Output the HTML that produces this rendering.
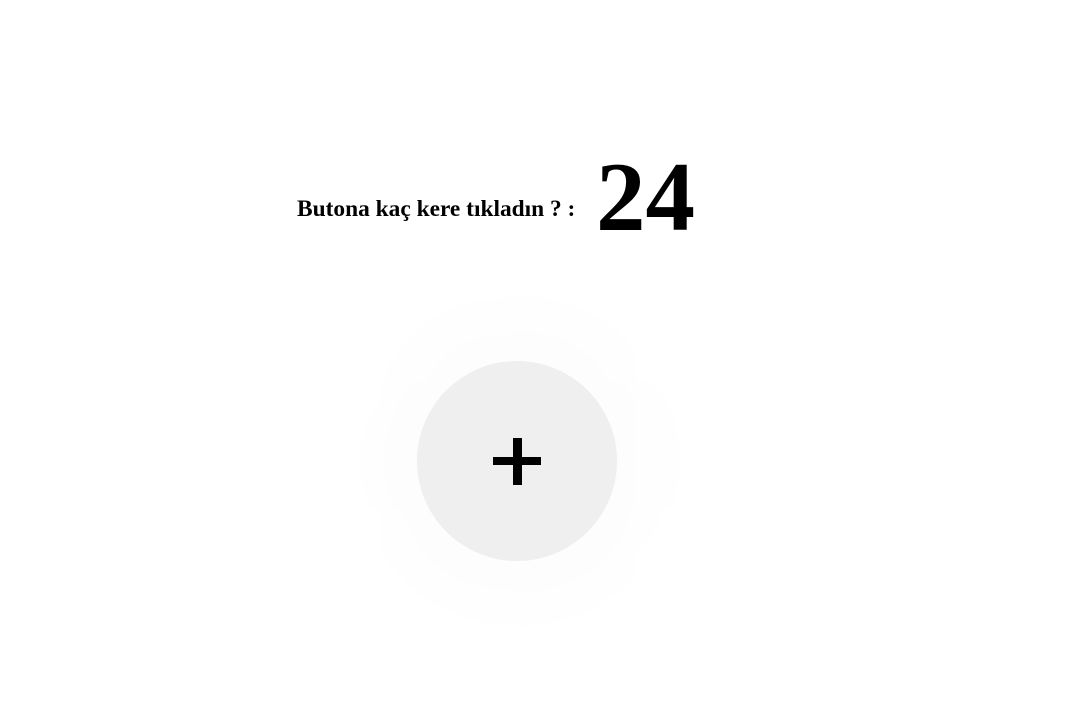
<!DOCTYPE html>
<html><head><style>
html,body{margin:0;padding:0;background:#fff;width:1078px;height:715px;overflow:hidden;font-family:"Liberation Serif",serif;}
.lbl{position:absolute;left:297px;top:198px;font-weight:bold;font-size:23.4px;line-height:1;white-space:nowrap;}
.num{position:absolute;left:596px;top:148px;font-weight:bold;font-size:99px;line-height:1;}
.btn{position:absolute;left:417px;top:361px;width:200px;height:200px;border-radius:50%;background:#efefef;box-shadow:0 0 110px 30px rgba(0,0,0,0.02);}
.h{position:absolute;left:493px;top:457px;width:48px;height:8px;background:#000;}
.v{position:absolute;left:513px;top:438px;width:9px;height:47px;background:#000;}
</style></head><body>
<div class="lbl">Butona kaç kere tıkladın ? :</div>
<div class="num">24</div>
<div class="btn"></div>
<div class="h"></div><div class="v"></div>
</body></html>
